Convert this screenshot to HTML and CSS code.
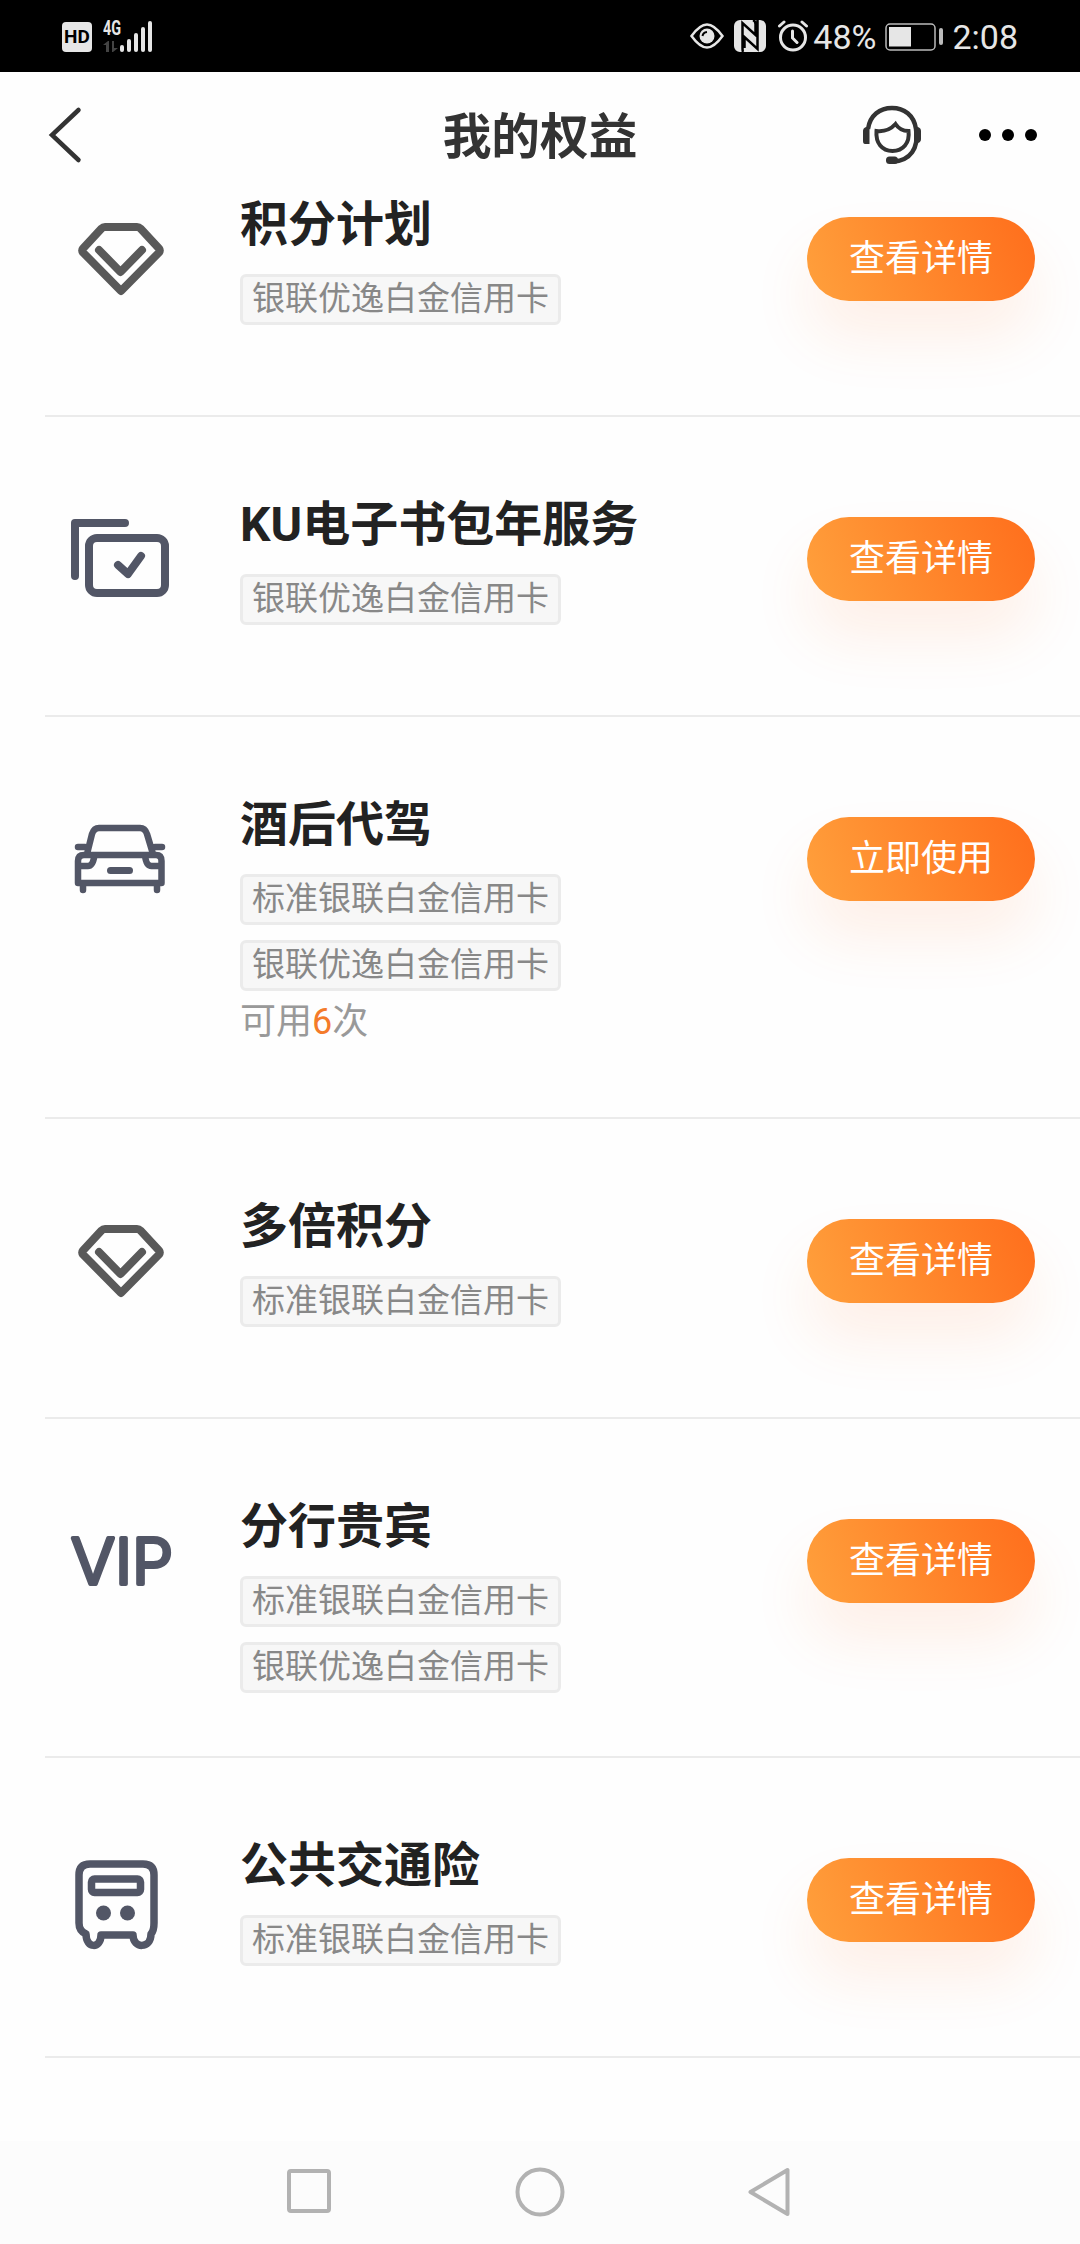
FILE: index.html
```html
<!DOCTYPE html>
<html lang="zh-CN">
<head>
<meta charset="utf-8">
<title>我的权益</title>
<link rel="stylesheet" href="styles.css">
</head>
<body>
<svg class="defs" width="0" height="0">
  <symbol id="gem" viewBox="0 0 120 120">
    <path d="M45 27H77Q79 27 80.500 28.500L99 48.500Q100.500 50.500 99 52.500L61 91 23 52.500Q21.500 50.500 23 48.500L41.500 28.500Q43 27 45 27Z"/>
    <path d="M39 50 60.5 72 82 50"/>
  </symbol>
</svg>
<div class="screen">
  <div class="status">
    <div class="status-left">
      <span class="hd">HD</span>
      <span class="net">
        <span class="gen">4G</span>
        <svg width="16" height="12" viewBox="0 0 16 12" fill="#444"><path d="M0 4 5 0H6V11H3V4ZM9 0H11V7H15L10 11H9Z"/></svg>
      </span>
      <svg class="bars" width="33" height="32" viewBox="0 0 33 32" fill="#e6e6e6"><rect x="0" y="24" width="4" height="7" rx="2"/><rect x="7" y="18" width="4" height="13" rx="2"/><rect x="14" y="12" width="4" height="19" rx="2"/><rect x="21" y="6" width="4" height="25" rx="2"/><rect x="28" y="0" width="4" height="31" rx="2"/></svg>
    </div>
    <div class="status-right">
      <svg class="eye" width="34" height="26" viewBox="0 0 34 26" fill="none" stroke="#e6e6e6" stroke-width="2.5"><path d="M1.5 13C8 4 13 1.5 17 1.5S26 4 32.500 13C26 22 21 24.500 17 24.500S8 22 1.500 13Z"/><circle cx="17" cy="13" r="7.500" fill="#e6e6e6" stroke="none"/><path d="M12.500 13Q13 9.500 17 9" stroke="#000" stroke-width="2"/></svg>
      <svg class="nfc" width="32" height="32" viewBox="0 0 32 32"><rect width="32" height="32" rx="6" fill="#e6e6e6"/><path d="M9 32Q8.500 31 8.500 28V3L21.500 15V4Q21.500 1 19 0M23.500 0V29L10.500 17V28" fill="none" stroke="#000" stroke-width="2.500"/></svg>
      <svg class="alarm" width="32" height="32" viewBox="0 0 32 32" fill="none" stroke="#e6e6e6" stroke-width="3" stroke-linecap="round"><circle cx="16" cy="17.500" r="12.500"/><path d="M15.500 11V18L20 22.500M2.500 6 7 2M25 2 29.500 6"/></svg>
      <span class="pct">48%</span>
      <svg class="battery" width="59" height="28" viewBox="0 0 59 28"><rect x="1" y="1" width="49" height="26" rx="4" fill="none" stroke="#bbb" stroke-width="1.500"/><rect x="4" y="4" width="22" height="19.500" fill="#e6e6e6"/><rect x="54" y="5" width="4" height="17" rx="2" fill="#bbb"/></svg>
      <span class="clock">2:08</span>
    </div>
  </div>

  <header class="header">
    <svg class="back" width="34" height="60" viewBox="0 0 34 60" fill="none" stroke="#333" stroke-width="4.500" stroke-linecap="round"><path d="M30.500 5 4 30 30.500 55"/></svg>
    <h1>我的权益</h1>
    <div class="tools">
      <svg width="60" height="60" viewBox="0 0 60 60" fill="none" stroke="#333" stroke-width="4.500"><path d="M6 24C8 10 18 3 30 3S52 10 54 24C57 44 48 55 32 56.500"/><path d="M4 22H7.500V39H3Q1 39 1 36V26Q1 23 4 22ZM52 22H56Q59 23 59 26V34Q59 37 56 38H52Z" fill="#333" stroke="none"/><rect x="24" y="51.500" width="12" height="7.500" rx="3.500" fill="#333" stroke="none"/><path d="M14.500 26C23 27 29 24 33.500 19Q38 26 46.500 26C48 38 41 46 30.500 46S13.500 38 14.500 26Z" stroke-width="4"/></svg>
      <svg width="58" height="12" viewBox="0 0 58 12"><circle cx="6" cy="6" r="6"/><circle cx="29" cy="6" r="6"/><circle cx="52" cy="6" r="6"/></svg>
    </div>
  </header>

  <main class="list">
    <section class="item">
      <svg class="icon gem"><use href="#gem"/></svg>
      <div class="info"><h2>积分计划</h2><span class="tag">银联优逸白金信用卡</span></div>
      <button class="btn">查看详情</button>
    </section>
    <section class="item">
      <svg class="icon" viewBox="0 0 120 120"><path d="M65 23H15V76"/><rect x="29" y="38" width="76" height="55" rx="8"/><path d="M58 65 68 74 81 56"/></svg>
      <div class="info"><h2>KU电子书包年服务</h2><span class="tag">银联优逸白金信用卡</span></div>
      <button class="btn">查看详情</button>
    </section>
    <section class="item">
      <svg class="icon car" viewBox="0 0 120 120"><path d="M27 54 32 34Q34 28 39 28H80Q85 28 87 34L93 54M18 47H25M95 47H102M18 83V61Q18 55 24 55H96Q101.500 55 101.500 61V83ZM18 66H28Q33 66 34.500 55M101.500 66H91.500Q86 66 85 55M23 84V90M97 84V90"/><path d="M50.500 70.500H69.500" stroke-width="7"/></svg>
      <div class="info"><h2>酒后代驾</h2><span class="tag">标准银联白金信用卡</span><span class="tag">银联优逸白金信用卡</span><p class="left">可用<b>6</b>次</p></div>
      <button class="btn">立即使用</button>
    </section>
    <section class="item">
      <svg class="icon gem"><use href="#gem"/></svg>
      <div class="info"><h2>多倍积分</h2><span class="tag">标准银联白金信用卡</span></div>
      <button class="btn">查看详情</button>
    </section>
    <section class="item">
      <svg class="icon vip" viewBox="0 0 120 120"><text x="11" y="82" textLength="102" lengthAdjust="spacingAndGlyphs">VIP</text></svg>
      <div class="info"><h2>分行贵宾</h2><span class="tag">标准银联白金信用卡</span><span class="tag">银联优逸白金信用卡</span></div>
      <button class="btn">查看详情</button>
    </section>
    <section class="item">
      <svg class="icon bus" viewBox="0 0 120 120"><path d="M26 93Q19 90 19 82V34Q19 23 30 23H83Q94 23 94 34V82Q94 90 91 93C91 108 73 108 73 94H41C41 108 26 108 26 93Z"/><rect x="31.500" y="38" width="49" height="13.500" rx="3"/><circle class="dot" cx="43.500" cy="72" r="7.500"/><circle class="dot" cx="67.500" cy="72" r="7.500"/></svg>
      <div class="info"><h2>公共交通险</h2><span class="tag">标准银联白金信用卡</span></div>
      <button class="btn">查看详情</button>
    </section>
  </main>

  <nav class="nav">
    <svg width="46" height="52" viewBox="0 0 46 52"><rect x="3" y="5" width="40" height="40" rx="2"/></svg>
    <svg width="50" height="52" viewBox="0 0 50 52"><circle cx="25" cy="26" r="22.500"/></svg>
    <svg width="46" height="52" viewBox="0 0 46 52"><path d="M39.500 4V48L2.500 26Z"/></svg>
  </nav>
</div>
</body>
</html>
```
FILE: styles.css
```css
* { box-sizing: border-box; }

body {
  margin: 0;
  background: #fefefe;
  color: #222;
  font-family: Roboto, "Noto Sans CJK SC", sans-serif;
}

h1, h2, p { margin: 0; }
svg { display: block; flex: none; }
.defs { position: absolute; }

.screen {
  display: flex;
  flex-direction: column;
  width: 1080px;
  height: 2244px;
  overflow: hidden;
}

/* status bar */
.status {
  display: flex;
  justify-content: space-between;
  flex: none;
  height: 72px;
  padding: 0 62px;
  background: #000;
  color: #e6e6e6;
  position: relative;
  z-index: 2;
}

.status-left, .status-right { display: flex; align-items: center; }

.hd {
  width: 30px;
  height: 30px;
  margin-top: 2px;
  border-radius: 4px;
  background: #e6e6e6;
  color: #000;
  font: 700 19px/30px Roboto, sans-serif;
  text-align: center;
}

.net { display: flex; flex-direction: column; gap: 4px; width: 17px; margin-left: 11px; }
.gen {
  font: 700 20px/17px Roboto, sans-serif;
  transform: scaleX(.72);
  transform-origin: left;
}
.bars { margin-top: 1px; }

.eye { margin-right: 10px; }
.nfc { margin-right: 11px; }
.alarm { margin-right: 4px; }
.pct, .clock { font-size: 34px; line-height: 72px; padding-top: 2px; }
.battery { margin: 2px 8px 0 9px; }

/* page header */
.header {
  display: grid;
  grid-template-columns: 1fr auto 1fr;
  align-items: center;
  flex: none;
  height: 126px;
  padding: 0 48px;
  background: #fefefe;
  position: relative;
  z-index: 1;
}
.header h1 {
  padding-top: 6px;
  color: #333;
  font-size: 48.7px;
  font-weight: 700;
  line-height: 72px;
}
.tools { display: flex; align-items: center; justify-content: flex-end; gap: 57px; margin-right: -5px; }

/* benefit list, scrolled partly under the header */
.list { flex: 1; margin-top: -81px; margin-left: 45px; }

.item {
  display: flex;
  align-items: flex-start;
  min-height: 300px;
  padding: 0 45px 63px 15px;
  border-bottom: 2px solid #ebebeb;
}

.icon {
  width: 120px;
  height: 120px;
  margin-top: 83px;
  fill: none;
  stroke: #525666;
  stroke-width: 8;
  stroke-linecap: round;
  stroke-linejoin: round;
}
.gem { stroke: #595959; }
.car { stroke-width: 6.5; }
.bus { stroke-width: 7.5; }
.dot { fill: #525666; stroke: none; }
.vip text {
  fill: #525666;
  stroke-width: 4;
  font: 300 63px Inter, sans-serif;
}

.info {
  display: flex;
  flex-direction: column;
  align-items: flex-start;
  flex: 1;
  padding: 72px 0 0 60px;
}
.info h2 { font-size: 48px; font-weight: 700; line-height: 72px; margin-bottom: 13px; }

.tag {
  height: 51px;
  padding: 1px 9px 0;
  border: 3px solid #ebebeb;
  border-radius: 6px;
  background: #f7f7f7;
  color: #888;
  font-size: 33px;
  font-weight: 400;
  line-height: 42px;
  white-space: nowrap;
}
.tag + .tag { margin-top: 15px; }

.left { color: #999; font-size: 36px; font-weight: 400; line-height: 63px; }
.left b { color: #f47b2a; font-weight: 400; }

.btn {
  width: 228px;
  height: 84px;
  margin-top: 100px;
  padding: 0 0 1px;
  border: 0;
  border-radius: 42px;
  background: linear-gradient(70deg, #ffa03c, #ff6e1c);
  box-shadow: 0 36px 60px rgba(255, 110, 30, .1);
  color: #fff;
  font: 400 36px/80px Roboto, "Noto Sans CJK SC", sans-serif;
}

/* system navigation */
.nav {
  display: flex;
  justify-content: space-between;
  align-items: flex-start;
  flex: none;
  height: 103px;
  padding: 25px 286px 0;
  background: #fcfcfc;
}
.nav svg { fill: none; stroke: #b2b2b2; stroke-width: 4; stroke-linejoin: round; }
```
